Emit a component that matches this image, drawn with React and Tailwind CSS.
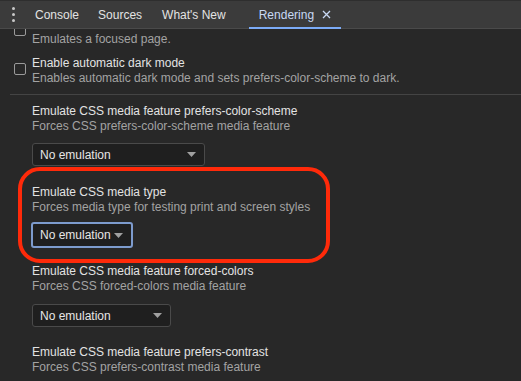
const Tab = ({ children, className = "" }) => (
  <div className={`flex h-full items-center text-[12px] text-[#e3e3e3] ${className}`}>
    {children}
  </div>
);

const Select = ({ width, focused = false }) => (
  <div
    className={`flex items-center justify-between rounded-[3px] bg-[#1f1f1f] pl-[7px] pr-[8px] text-[12px] text-[#e6e6e6] ${
      focused
        ? "h-[26px] -ml-[1px] border-2 border-[#7d9bcd]"
        : "h-[23px] border border-[#4a4a4a]"
    }`}
    style={{ width }}
  >
    <span>No emulation</span>
    <svg width="9" height="5" viewBox="0 0 9 5">
      <path d="M0 0h9L4.5 5z" fill="#a0a0a0" />
    </svg>
  </div>
);

const Feature = ({ title, sub }) => (
  <div className="pt-[2px] leading-[15px]">
    {title ? (
      <div className="text-[12px] text-[#e3e3e3]">{title}</div>
    ) : (
      <div className="h-[15px]" />
    )}
    <div className="text-[12px] text-[#a3a3a3]">{sub}</div>
  </div>
);

const CheckItem = ({ title, sub }) => (
  <div className="flex">
    <div className="ml-[14px] mt-[9px] h-[12px] w-[12px] shrink-0 rounded-[2px] border border-[#9a9a9a]" />
    <div className="ml-[6px]">
      <Feature title={title} sub={sub} />
    </div>
  </div>
);

export default function App() {
  return (
    <div
      className="relative flex h-[381px] w-[521px] flex-col overflow-hidden bg-[#282828]"
      style={{ fontFamily: '"Liberation Sans", Arial, sans-serif' }}
    >
      <div className="relative z-10 flex h-[29px] shrink-0 items-stretch border-t border-[#2e2e2e] border-b border-b-[#4a4a4a] bg-[#3b3b3b]">
        <div className="flex w-[25px] flex-col items-center justify-center gap-[3px] pl-[1px]">
          <span className="h-[3px] w-[3px] rounded-full bg-[#c8c8c8]" />
          <span className="h-[3px] w-[3px] rounded-full bg-[#c8c8c8]" />
          <span className="h-[3px] w-[3px] rounded-full bg-[#c8c8c8]" />
        </div>
        <Tab className="ml-[10px]">Console</Tab>
        <Tab className="ml-[19px]">Sources</Tab>
        <Tab className="ml-[20px]">What's New</Tab>
        <div className="relative ml-[23px] flex h-full items-center gap-[8px] px-[10px] text-[12px] text-[#c8d8f3]">
          <span>Rendering</span>
          <svg width="9" height="9" viewBox="0 0 9 9">
            <path d="M1 1l7 7M8 1L1 8" stroke="#c8d8f3" strokeWidth="1.3" />
          </svg>
          <span className="absolute bottom-[-1px] left-0 right-0 h-[2px] bg-[#7cacf8]" />
        </div>
      </div>

      <div className="flex-1 overflow-hidden">
        <div className="-mt-[14px]">
          <CheckItem sub="Emulates a focused page." />
          <div className="mt-[7px]">
            <CheckItem
              title="Enable automatic dark mode"
              sub="Enables automatic dark mode and sets prefers-color-scheme to dark."
            />
          </div>
          <div className="ml-[10px] mt-[8px] h-px bg-[#444444]" />

          <div className="pl-[32px] pt-[7px]">
            <Feature
              title="Emulate CSS media feature prefers-color-scheme"
              sub="Forces CSS prefers-color-scheme media feature"
            />
            <div className="mt-[9px]">
              <Select width={173} />
            </div>

            <div className="relative mt-[17px]">
              <div className="pointer-events-none absolute -left-[14px] -top-[16px] h-[96px] w-[312px] rounded-[22px] border-[4px] border-[#ff2a0a]" />
              <Feature
                title="Emulate CSS media type"
                sub="Forces media type for testing print and screen styles"
              />
              <div className="mt-[7px]">
                <Select width={102} focused />
              </div>
            </div>

            <div className="mt-[14px]">
              <Feature
                title="Emulate CSS media feature forced-colors"
                sub="Forces CSS forced-colors media feature"
              />
              <div className="mt-[10px]">
                <Select width={139} />
              </div>
            </div>

            <div className="mt-[16px]">
              <Feature
                title="Emulate CSS media feature prefers-contrast"
                sub="Forces CSS prefers-contrast media feature"
              />
            </div>
          </div>
        </div>
      </div>
    </div>
  );
}
